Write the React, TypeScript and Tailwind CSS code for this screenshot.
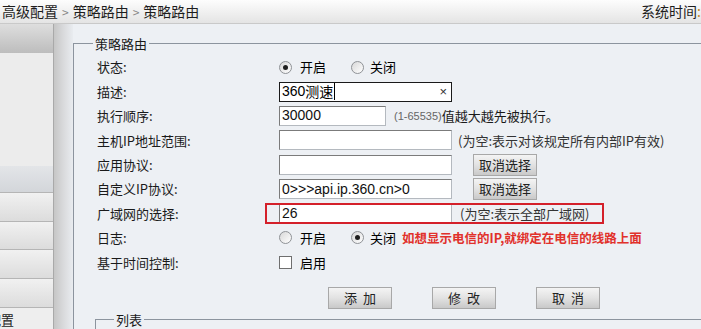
import React from "react";

const cjk = "font-['SimSun','Noto_Sans_CJK_SC',sans-serif]";

function Radio({ checked }: { checked?: boolean }) {
  return (
    <span className="w-[13px] h-[13px] rounded-full border border-[#8f9296] bg-gradient-to-br from-[#d8d8d8] to-white flex items-center justify-center shrink-0">
      {checked && <span className="w-[5px] h-[5px] rounded-full bg-[#1e1e1e]" />}
    </span>
  );
}

function TextBox({ w, children }: { w: string; children?: React.ReactNode }) {
  return (
    <div
      className={`${w} h-[20px] bg-white border border-[#b4b9bf] border-t-[#7b7b7b] border-l-[#7b7b7b] flex items-center pl-[2px] text-[14px] text-[#111] font-['Liberation_Sans',Arial,sans-serif] overflow-hidden whitespace-nowrap`}
    >
      {children}
    </div>
  );
}

function GrayButton({ children, w = "w-[64px]" }: { children: React.ReactNode; w?: string }) {
  return (
    <button className={`${w} h-[22px] border border-[#a8a8a8] bg-gradient-to-b from-[#f4f4f4] via-[#e2e2e2] to-[#c9c9c9] text-[13px] text-[#222] flex items-center justify-center shrink-0`}>
      {children}
    </button>
  );
}

function Row({ label, children }: { label: string; children: React.ReactNode }) {
  return (
    <div className="flex items-center h-[24.4px]">
      <div className="w-[182px] shrink-0 text-[13px] text-[#1a1a1a]">{label}</div>
      <div className="flex items-center">{children}</div>
    </div>
  );
}

export default function App() {
  return (
    <div className={`w-[701px] h-[329px] overflow-hidden flex flex-col bg-[#edf0f4] ${cjk}`}>
      {/* top breadcrumb bar */}
      <div className="h-[24px] shrink-0 flex items-center justify-between bg-gradient-to-b from-[#fdfdfd] to-[#e4e4e4] border-b border-[#c9c9c9] whitespace-nowrap">
        <div className="pl-[2px] text-[14px] text-[#1d1d1d] flex items-center gap-[4px]">
          <span>高级配置</span>
          <span className="text-[#888] text-[12px]">&gt;</span>
          <span>策略路由</span>
          <span className="text-[#888] text-[12px]">&gt;</span>
          <span>策略路由</span>
        </div>
        <div className="text-[14px] text-[#1d1d1d] w-[60px] overflow-hidden">
          系统时间<span className="text-[#c58a2a]">:</span>2020
        </div>
      </div>

      <div className="flex flex-1 min-h-0">
        {/* sidebar */}
        <div className="w-[54px] shrink-0 flex flex-col border-r border-[#a9a9a9] overflow-hidden">
          <div className="h-[29px] bg-gradient-to-b from-[#dedede] to-[#bdbdbd]" />
          <div className="h-[115px] bg-[#ececec]" />
          <div className="h-[27px] bg-gradient-to-b from-[#e3e5e8] to-[#d3d6da] border-b border-[#b5b5b5]" />
          <div className="h-[29px] bg-gradient-to-b from-[#f1f1f1] to-[#dcdcdc] border-b border-[#b5b5b5]" />
          <div className="h-[29px] bg-gradient-to-b from-[#f1f1f1] to-[#dcdcdc] border-b border-[#b5b5b5]" />
          <div className="h-[29px] bg-gradient-to-b from-[#f1f1f1] to-[#dcdcdc] border-b border-[#b5b5b5]" />
          <div className="h-[29px] bg-gradient-to-b from-[#f1f1f1] to-[#dcdcdc] border-b border-[#b5b5b5]" />
          <div className="flex-1 bg-[#eeeeee] text-[13px] text-[#222] pt-[2px] whitespace-nowrap flex justify-end pr-[39px]">
            <span>配置</span>
          </div>
        </div>

        {/* splitter */}
        <div className="w-[19px] shrink-0 bg-gradient-to-r from-[#c6c6c6] via-[#d9dadc] to-[#e9ecf0]" />

        {/* main */}
        <div className="flex-1 min-w-0 pt-[11px]">
          <fieldset className="border-t border-l border-[#8c949e] pb-[4px]">
            <legend className="ml-[19px] px-[2px] text-[13px] text-[#1a1a1a] leading-[17px]">策略路由</legend>

            <div className="flex flex-col pt-[3px] pl-[23px]">
              <Row label="状态:">
                <div className="flex items-center gap-[8px] w-[72px]">
                  <Radio checked />
                  <span className="text-[13px]">开启</span>
                </div>
                <div className="flex items-center gap-[6px]">
                  <Radio />
                  <span className="text-[13px]">关闭</span>
                </div>
              </Row>

              <Row label="描述:">
                <div className="w-[173px] h-[20px] bg-white border border-[#1a1a1a] flex items-center pl-[2px] text-[14px] font-['Liberation_Sans',Arial,sans-serif] relative">
                  <span>360</span>
                  <span className={`${cjk} text-[14px]`}>测速</span>
                  <span className="w-px h-[17px] bg-black ml-[1px]" />
                  <span className="absolute right-[4px] text-[13px] text-[#333]">×</span>
                </div>
              </Row>

              <Row label="执行顺序:">
                <TextBox w="w-[107px]">30000</TextBox>
                <span className="ml-[8px] text-[11px] text-[#666] font-['Liberation_Sans',Arial,sans-serif]">(1-65535)</span>
                <span className="text-[13px] text-[#1a1a1a]">值越大越先被执行。</span>
              </Row>

              <Row label="主机IP地址范围:">
                <TextBox w="w-[173px]" />
                <span className="ml-[6px] text-[13px] text-[#333]">(为空:表示对该规定所有内部IP有效)</span>
              </Row>

              <Row label="应用协议:">
                <TextBox w="w-[173px]" />
                <div className="ml-[21px]">
                  <GrayButton>取消选择</GrayButton>
                </div>
              </Row>

              <Row label="自定义IP协议:">
                <TextBox w="w-[173px]">0&gt;&gt;&gt;api.ip.360.cn&gt;0</TextBox>
                <div className="ml-[21px]">
                  <GrayButton>取消选择</GrayButton>
                </div>
              </Row>

              <Row label="广域网的选择:">
                <div className="relative flex items-center">
                  <TextBox w="w-[173px]">26</TextBox>
                  <span className="ml-[8px] text-[13px] text-[#333]">(为空:表示全部广域网)</span>
                  <div className="absolute -left-[14px] -top-[1px] w-[339px] h-[21px] border-2 border-[#d4202a] pointer-events-none" />
                </div>
              </Row>

              <Row label="日志:">
                <div className="flex items-center gap-[8px] w-[72px]">
                  <Radio />
                  <span className="text-[13px]">开启</span>
                </div>
                <div className="flex items-center gap-[6px]">
                  <Radio checked />
                  <span className="text-[13px]">关闭</span>
                </div>
                <span className="ml-[6px] text-[12.5px] font-bold text-[#e1312b]">如想显示电信的IP,就绑定在电信的线路上面</span>
              </Row>

              <Row label="基于时间控制:">
                <div className="flex items-center gap-[8px]">
                  <span className="w-[13px] h-[13px] border border-[#6f6f6f] bg-white" />
                  <span className="text-[13px]">启用</span>
                </div>
              </Row>

              <div className="flex items-center gap-[40px] pl-[231px] mt-[12px]">
                <GrayButton>添&nbsp;&nbsp;加</GrayButton>
                <GrayButton>修&nbsp;&nbsp;改</GrayButton>
                <GrayButton>取&nbsp;&nbsp;消</GrayButton>
              </div>
            </div>

            <fieldset className="border-t border-l border-[#8c949e] ml-[21px] mt-[3px] h-[20px]">
              <legend className="ml-[18px] px-[2px] text-[13px] text-[#1a1a1a] leading-[15px]">列表</legend>
            </fieldset>
          </fieldset>
        </div>
      </div>
    </div>
  );
}
